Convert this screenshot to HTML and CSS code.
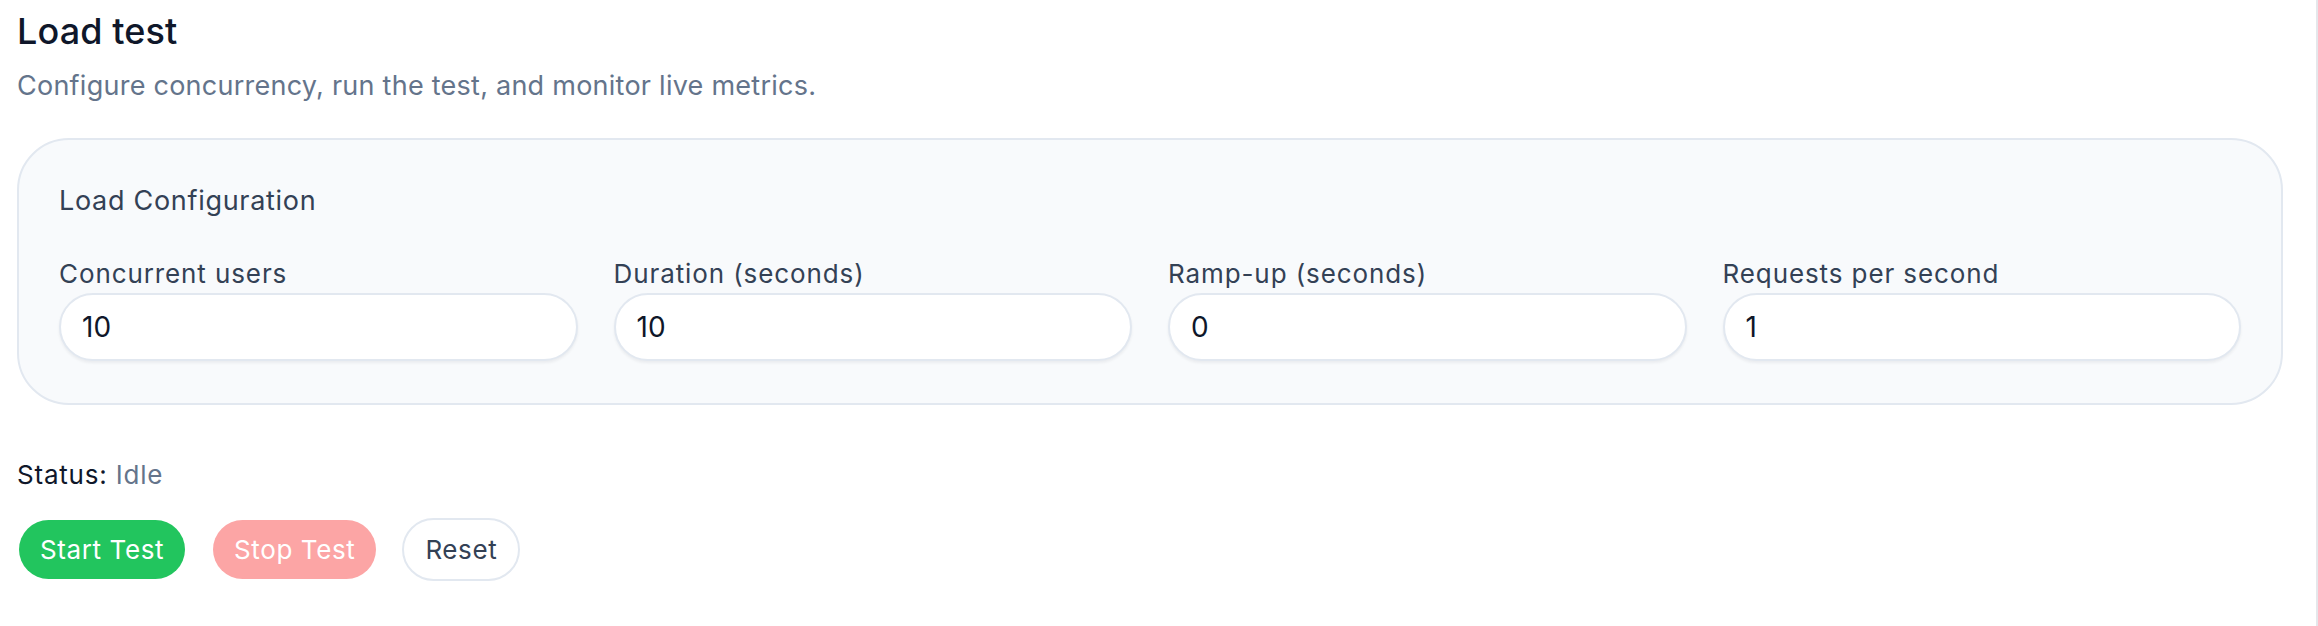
FILE: index.html
```html
<!DOCTYPE html>
<html lang="en">
<head>
<meta charset="utf-8">
<title>Load test</title>
<link rel="stylesheet" href="styles.css">
</head>
<body>
<div class="page">
  <h1 class="title">Load test</h1>
  <p class="subtitle">Configure concurrency, run the test, and monitor live metrics.</p>

  <section class="card">
    <h2 class="card-title">Load Configuration</h2>
    <div class="fields">
      <label class="field">
        <span class="field-label">Concurrent users</span>
        <input class="field-input" type="text" value="10">
      </label>
      <label class="field">
        <span class="field-label">Duration (seconds)</span>
        <input class="field-input" type="text" value="10">
      </label>
      <label class="field">
        <span class="field-label">Ramp-up (seconds)</span>
        <input class="field-input" type="text" value="0">
      </label>
      <label class="field">
        <span class="field-label">Requests per second</span>
        <input class="field-input" type="text" value="1">
      </label>
    </div>
  </section>

  <p class="status">Status: <span class="status-value">Idle</span></p>

  <div class="actions">
    <button class="btn btn-start" type="button">Start Test</button>
    <button class="btn btn-stop" type="button">Stop Test</button>
    <button class="btn btn-reset" type="button">Reset</button>
  </div>
</div>
</body>
</html>
```

FILE: styles.css
```css
* { box-sizing: border-box; }

html, body {
  margin: 0;
  padding: 0;
  background: #ffffff;
}

body {
  font-family: Inter, "Liberation Sans", sans-serif;
  color: #0f172a;
}

.page {
  min-height: 100vh;
  padding: 4px 33px 0 17px;
  border-right: 2px solid #e5e7eb;
}

.title {
  margin: 0;
  font-size: 36px;
  line-height: 54px;
  font-weight: 500;
  color: #0f172a;
  letter-spacing: 0.1px;
}

.subtitle {
  margin: 8px 0 0;
  font-size: 27px;
  line-height: 40px;
  font-weight: 400;
  color: #64748b;
  letter-spacing: 0.25px;
}

.card {
  margin-top: 32px;
  background: #f8fafc;
  border: 2px solid #e2e8f0;
  border-radius: 52px;
  padding: 41px 40px 42px;
}

.card-title {
  margin: 0;
  font-size: 27px;
  line-height: 40px;
  font-weight: 400;
  color: #334155;
  letter-spacing: 0.7px;
}

.fields {
  margin-top: 35px;
  display: grid;
  grid-template-columns: repeat(4, 1fr);
  column-gap: 36px;
}

.field {
  display: flex;
  flex-direction: column;
}

.field-label {
  font-size: 26px;
  line-height: 36px;
  color: #334155;
  margin-bottom: 1px;
  letter-spacing: 0.9px;
}

.field-input {
  width: 100%;
  height: 68px;
  border: 2px solid #e2e8f0;
  border-radius: 999px;
  background: #ffffff;
  padding: 0 21px;
  font-family: Inter, "Liberation Sans", sans-serif;
  font-size: 28px;
  color: #0f172a;
  box-shadow: 0 2px 3px rgba(15, 23, 42, 0.06);
  outline: none;
}

.status {
  margin: 50px 0 0;
  font-size: 26px;
  line-height: 39px;
  color: #0f172a;
  letter-spacing: 0.8px;
}

.status-value {
  color: #64748b;
}

.actions {
  margin-top: 24px;
  display: flex;
  align-items: center;
  gap: 24px;
}

.btn {
  font-family: Inter, "Liberation Sans", sans-serif;
  font-size: 26px;
  line-height: 39px;
  padding: 10px 21px;
  border: 2px solid transparent;
  border-radius: 999px;
  background-clip: padding-box;
  cursor: pointer;
  letter-spacing: 0.6px;
}

.btn-start {
  background-color: #22c55e;
  color: #ffffff;
}

.btn-stop {
  background-color: #fca5a5;
  color: #ffffff;
}

.btn-reset {
  background-color: #ffffff;
  border-color: #e2e8f0;
  color: #334155;
}
```
